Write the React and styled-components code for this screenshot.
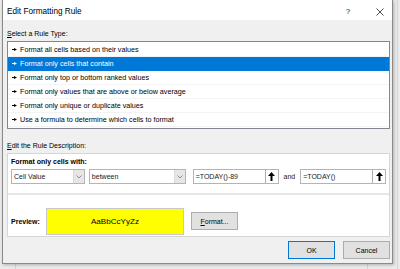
import React from "react";
import styled, { createGlobalStyle } from "styled-components";

const Global = createGlobalStyle`
  html, body {
    margin: 0;
    padding: 0;
    width: 400px;
    height: 269px;
    overflow: hidden;
    background: #ebebeb;
    background-image:
      linear-gradient(to right, transparent 15px, #d4d4d4 15px, #d4d4d4 16px, transparent 16px),
      linear-gradient(to right, transparent 367px, #d4d4d4 367px, #d4d4d4 368px, transparent 368px),
      linear-gradient(to right, transparent 397px, #d4d4d4 397px, #d4d4d4 398px, transparent 398px);
    font-family: "Liberation Sans", Arial, sans-serif;
    color: #000;
  }
  * { box-sizing: border-box; }
`;

const Page = styled.div`
  padding-left: 2px;
  width: 400px;
  height: 269px;
`;

const Dialog = styled.div`
  width: 391px;
  height: 264px;
  border: 1px solid #8a8a8a;
  border-top: none;
  background: #f0f0f0;
  box-shadow: 1px 1px 3px rgba(0, 0, 0, 0.25);
  display: flex;
  flex-direction: column;
`;

const TitleBar = styled.div`
  height: 20px;
  background: #fff;
  display: flex;
  align-items: center;
  padding-left: 4px;
  padding-top: 3px;
`;

const Title = styled.div`
  flex: 1;
  font-size: 8.2px;
  color: #000;
`;

const TitleBtn = styled.div`
  width: ${(p) => p.$w}px;
  display: flex;
  justify-content: center;
  align-items: center;
  font-size: 8px;
  color: #222;
`;

const Body = styled.div`
  flex: 1;
  padding: 0 2px 0 4px;
  display: flex;
  flex-direction: column;
`;

const Label = styled.div`
  font-size: 7px;
  line-height: 10px;
  height: 10px;
  margin-top: ${(p) => p.$mt}px;
  margin-bottom: 2px;
  color: #000;
`;

const U = styled.span`
  text-decoration: underline;
`;

const List = styled.div`
  border: 1px solid #828790;
  background: #fff;
  padding: 1px 0;
  height: 88px;
`;

const Row = styled.div`
  height: 14px;
  display: flex;
  align-items: center;
  padding-left: 4px;
  font-size: 7.2px;
  background: ${(p) => (p.$sel ? "#0078d7" : "#fff")};
  color: ${(p) => (p.$sel ? "#fff" : "#000")};
  border-bottom: 1px solid ${(p) => (p.$sel ? "#0078d7" : "#f3f3f3")};
`;

const Bullet = styled.svg`
  width: 5px;
  height: 3px;
  margin-right: 3px;
  flex-shrink: 0;
`;

const DescBox = styled.div`
  border: 1px solid #d6d6d6;
  background: #fff;
  display: flex;
  flex-direction: column;
`;

const Panel = styled.div`
  height: 41px;
  padding: ${(p) => p.$pad};
  display: flex;
  flex-direction: ${(p) => (p.$row ? "row" : "column")};
  align-items: ${(p) => (p.$row ? "center" : "stretch")};
  border-bottom: ${(p) => (p.$sep ? "2px solid #e6e6e6" : "none")};
`;

const Bold = styled.div`
  font-size: 7px;
  font-weight: bold;
  line-height: 10px;
  height: 10px;
`;

const CriteriaRow = styled.div`
  margin-top: 2px;
  display: flex;
  align-items: center;
  height: 15px;
`;

const Combo = styled.div`
  width: ${(p) => p.$w}px;
  height: 15px;
  margin-right: ${(p) => p.$mr}px;
  border: 1px solid #b4b4b4;
  background: #fff;
  display: flex;
  align-items: stretch;
`;

const FieldText = styled.div`
  flex: 1;
  font-size: 7px;
  color: #222;
  display: flex;
  align-items: center;
  padding-left: 2px;
  white-space: nowrap;
  overflow: hidden;
`;

const ArrowBox = styled.div`
  width: 11px;
  background: #e6e6e6;
  border-left: 1px solid #d9d9d9;
  display: flex;
  align-items: center;
  justify-content: center;
`;

const RefBtn = styled.div`
  width: 13px;
  border-left: 1px solid #adadad;
  background: #fff;
  display: flex;
  align-items: center;
  justify-content: center;
`;

const And = styled.div`
  font-size: 7px;
  color: #222;
  margin: 0 5px;
`;

const PreviewLabel = styled.div`
  font-size: 7px;
  font-weight: bold;
  width: 35px;
`;

const Swatch = styled.div`
  width: 138px;
  height: 27px;
  background: #ffff00;
  border: 1px solid #c8c8c8;
  display: flex;
  align-items: center;
  justify-content: center;
  font-size: 8.1px;
  color: #000;
  margin-right: 7px;
`;

const Button = styled.div`
  width: 47px;
  height: 18px;
  background: #e1e1e1;
  border: 1px solid ${(p) => (p.$def ? "#0078d7" : "#adadad")};
  display: flex;
  align-items: center;
  justify-content: center;
  font-size: 7px;
  color: #000;
`;

const Footer = styled.div`
  margin-top: 4px;
  display: flex;
  justify-content: flex-end;
  gap: 8px;
`;

const rules = [
  "Format all cells based on their values",
  "Format only cells that contain",
  "Format only top or bottom ranked values",
  "Format only values that are above or below average",
  "Format only unique or duplicate values",
  "Use a formula to determine which cells to format",
];

const Chevron = () => (
  <svg width="6" height="4" viewBox="0 0 6 4">
    <path d="M0.5 0.5 L3 3 L5.5 0.5" fill="none" stroke="#777" strokeWidth="0.8" />
  </svg>
);

const UpArrow = () => (
  <svg width="7" height="9" viewBox="0 0 7 9">
    <polygon points="3.5,0 7,4 4.5,4 4.5,9 2.5,9 2.5,4 0,4" fill="#000" />
  </svg>
);

const RefInput = ({ w, value }) => (
  <Combo $w={w} $mr={0}>
    <FieldText>{value}</FieldText>
    <RefBtn>
      <UpArrow />
    </RefBtn>
  </Combo>
);

export default function App() {
  return (
    <>
      <Global />
      <Page>
        <Dialog>
          <TitleBar>
            <Title>Edit Formatting Rule</Title>
            <TitleBtn $w={40}>?</TitleBtn>
            <TitleBtn $w={24}>
              <svg width="8" height="8" viewBox="0 0 8 8">
                <path d="M0.5 0.5 L7.5 7.5 M7.5 0.5 L0.5 7.5" stroke="#222" strokeWidth="0.8" />
              </svg>
            </TitleBtn>
          </TitleBar>
          <Body>
            <Label $mt={9}>
              <U>S</U>elect a Rule Type:
            </Label>
            <List>
              {rules.map((r, i) => (
                <Row key={r} $sel={i === 1}>
                  <Bullet viewBox="0 0 5 3">
                    <rect x="0" y="1" width="2.5" height="1" fill={i === 1 ? "#fff" : "#000"} />
                    <polygon points="2,0 5,1.5 2,3" fill={i === 1 ? "#fff" : "#000"} />
                  </Bullet>
                  {r}
                </Row>
              ))}
            </List>
            <Label $mt={12}>
              <U>E</U>dit the Rule Description:
            </Label>
            <DescBox>
              <Panel $sep $pad="3px 3px 0 3px">
                <Bold>Format only cells with:</Bold>
                <CriteriaRow>
                  <Combo $w={74} $mr={4}>
                    <FieldText>Cell Value</FieldText>
                    <ArrowBox>
                      <Chevron />
                    </ArrowBox>
                  </Combo>
                  <Combo $w={97} $mr={7}>
                    <FieldText>between</FieldText>
                    <ArrowBox>
                      <Chevron />
                    </ArrowBox>
                  </Combo>
                  <RefInput w={86} value="=TODAY()-89" />
                  <And>and</And>
                  <RefInput w={86} value="=TODAY()" />
                </CriteriaRow>
              </Panel>
              <Panel $row $pad="12px 3px 1px 3px">
                <PreviewLabel>Preview:</PreviewLabel>
                <Swatch>AaBbCcYyZz</Swatch>
                <Button>
                  <U>F</U>ormat...
                </Button>
              </Panel>
            </DescBox>
            <Footer>
              <Button $def>OK</Button>
              <Button>Cancel</Button>
            </Footer>
          </Body>
        </Dialog>
      </Page>
    </>
  );
}
